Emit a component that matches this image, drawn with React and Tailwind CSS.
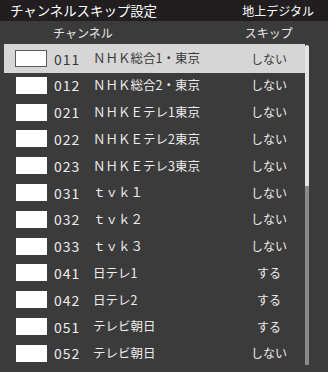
import React from "react";

const rows = [
  ["011", "ＮＨＫ総合1・東京", "しない"],
  ["012", "ＮＨＫ総合2・東京", "しない"],
  ["021", "ＮＨＫＥテレ1東京", "しない"],
  ["022", "ＮＨＫＥテレ2東京", "しない"],
  ["023", "ＮＨＫＥテレ3東京", "しない"],
  ["031", "ｔｖｋ１", "しない"],
  ["032", "ｔｖｋ２", "しない"],
  ["033", "ｔｖｋ３", "しない"],
  ["041", "日テレ1", "する"],
  ["042", "日テレ2", "する"],
  ["051", "テレビ朝日", "する"],
  ["052", "テレビ朝日", "しない"],
];

export default function App() {
  return (
    <div
      className="w-[328px] h-[372px] bg-[#3c3b3b] overflow-hidden flex flex-col"
      style={{ fontFamily: '"Noto Sans CJK JP", "Noto Sans", sans-serif' }}
    >
      <div className="h-[21px] bg-[#221e1f] flex items-center justify-between pl-[10px] pr-[14px] text-white">
        <span className="text-[13.5px] leading-none tracking-[-0.1px]">チャンネルスキップ設定</span>
        <span className="text-[12px] leading-none">地上デジタル</span>
      </div>
      <div className="h-[24.2px] flex items-center text-[12px] leading-none text-[#e6e6e6]">
        <span className="ml-[53px]">チャンネル</span>
        <span className="ml-[132px]">スキップ</span>
      </div>
      <div className="flex flex-1">
        <div className="w-[305px] pl-[4px] flex flex-col">
          {rows.map(([num, name, skip], i) => {
            const sel = i === 0;
            return (
              <div
                key={num}
                className={
                  sel
                    ? "h-[29.3px] -mt-[1.2px] -mb-[1.3px] bg-[#d6d6d6] text-[#3a3a3a] flex items-center shrink-0"
                    : "h-[26.8px] text-[#ececec] flex items-center shrink-0"
                }
              >
                <div
                  className={
                    sel
                      ? "ml-[11px] w-[32px] h-[17px] bg-white border border-[#5a5a5a]"
                      : "ml-[12px] w-[31px] h-[17px] bg-white"
                  }
                />
                <span className="ml-[7px] w-[39px] text-[14px] leading-none tracking-[1px]">
                  {num}
                </span>
                <span className="flex-1 text-[12.5px] leading-none whitespace-nowrap">{name}</span>
                <span className="w-[60px] mr-[6px] text-center text-[12px] leading-none">{skip}</span>
              </div>
            );
          })}
        </div>
        <div className="w-[4px] flex flex-col mt-[-0.5px] h-[320px]">
          <div className="h-[141px] bg-[#e4e4e4] rounded-t-[2px]" />
          <div className="flex-1 bg-[#8a8a8a]" />
        </div>
      </div>
    </div>
  );
}
